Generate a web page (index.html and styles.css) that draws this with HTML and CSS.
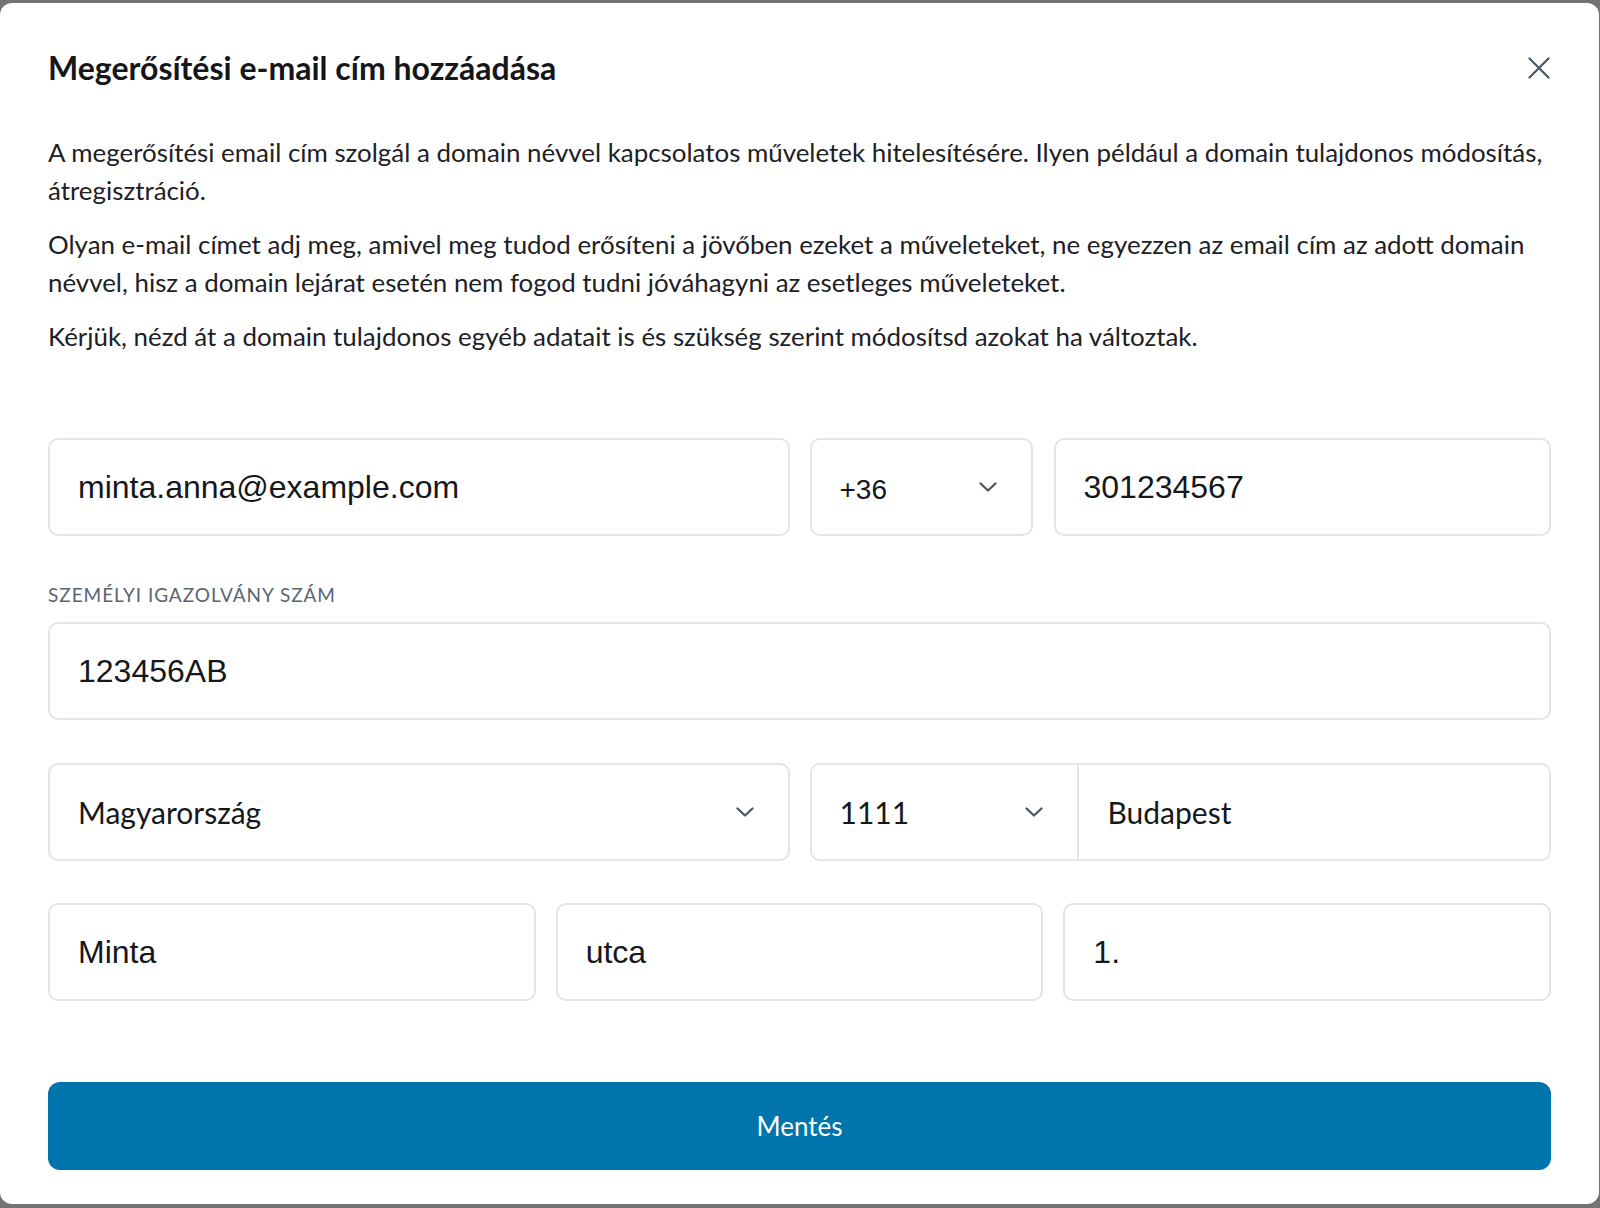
FILE: index.html
```html
<!DOCTYPE html>
<html lang="hu">
<head>
    <meta charset="UTF-8">
    <meta name="viewport" content="width=device-width, initial-scale=1.0">
    <title>Megerősítési e-mail cím hozzáadása</title>
    <link rel="stylesheet" href="styles.css">
</head>
<body>
    <div class="dialog">
        <div class="dialog-header">
            <h1>Megerősítési e-mail cím hozzáadása</h1>
            <button class="close-button" aria-label="Bezárás">
                <svg width="22" height="22" viewBox="0 0 22 22">
                    <path d="M1.5 1.5L20.5 20.5M20.5 1.5L1.5 20.5" stroke="#4b5563" stroke-width="2.2" stroke-linecap="round" fill="none"/>
                </svg>
            </button>
        </div>

        <div class="intro">
            <p>A megerősítési email cím szolgál a domain névvel kapcsolatos műveletek hitelesítésére. Ilyen például a domain tulajdonos módosítás, átregisztráció.</p>
            <p>Olyan e-mail címet adj meg, amivel meg tudod erősíteni a jövőben ezeket a műveleteket, ne egyezzen az email cím az adott domain névvel, hisz a domain lejárat esetén nem fogod tudni jóváhagyni az esetleges műveleteket.</p>
            <p>Kérjük, nézd át a domain tulajdonos egyéb adatait is és szükség szerint módosítsd azokat ha változtak.</p>
        </div>

        <form class="form" onsubmit="return false">
            <div class="row row-contact">
                <input type="text" class="field" value="minta.anna@example.com">
                <div class="phone">
                    <div class="select select-prefix">
                        <span>+36</span>
                        <svg class="chevron" width="18" height="10" viewBox="0 0 18 10"><path d="M1.5 1.5L9 8.5L16.5 1.5"/></svg>
                    </div>
                    <input type="text" class="field" value="301234567">
                </div>
            </div>

            <label class="field-label" for="idNumber">Személyi igazolvány szám</label>
            <input type="text" class="field" id="idNumber" value="123456AB">

            <div class="row row-address">
                <div class="select select-text">
                    <span>Magyarország</span>
                    <svg class="chevron" width="18" height="10" viewBox="0 0 18 10"><path d="M1.5 1.5L9 8.5L16.5 1.5"/></svg>
                </div>
                <div class="combo">
                    <div class="select select-text combo-zip">
                        <span>1111</span>
                        <svg class="chevron" width="18" height="10" viewBox="0 0 18 10"><path d="M1.5 1.5L9 8.5L16.5 1.5"/></svg>
                    </div>
                    <input type="text" class="combo-city" value="Budapest">
                </div>
            </div>

            <div class="row row-street">
                <input type="text" class="field" value="Minta">
                <input type="text" class="field" value="utca">
                <input type="text" class="field" value="1.">
            </div>

            <button type="submit" class="save-button">Mentés</button>
        </form>
    </div>
</body>
</html>
```

FILE: styles.css
```css
html {
    background: #737373;
}

body {
    margin: 0;
    padding: 3px 1px 4px 0;
    font-family: 'Lato', sans-serif;
    color: #1d2025;
}

.dialog {
    background: #ffffff;
    border-radius: 12px;
    padding: 45px 48px 34px;
}

.dialog-header {
    display: flex;
    justify-content: space-between;
    align-items: center;
    height: 40px;
}

h1 {
    margin: 0;
    font-size: 32px;
    line-height: 40px;
    font-weight: 700;
    color: #14161a;
}

.close-button {
    background: none;
    border: none;
    padding: 0;
    width: 22px;
    height: 22px;
    margin-right: 1px;
    display: flex;
    cursor: pointer;
}

.intro {
    margin-top: 45px;
}

.intro p {
    margin: 0 0 16px;
    font-size: 25.9px;
    line-height: 38px;
}

.intro p:last-child {
    margin-bottom: 0;
}

.form {
    margin-top: 83px;
    display: flex;
    flex-direction: column;
}

.row {
    display: grid;
    gap: 20px;
}

.row-contact,
.row-address {
    grid-template-columns: 1fr 1fr;
}

.row-address {
    margin-top: 43px;
}

.row-street {
    grid-template-columns: repeat(3, 1fr);
    margin-top: 42px;
}

.field,
.select,
.combo {
    box-sizing: border-box;
    height: 98px;
    border: 2px solid #e3e4e9;
    border-radius: 10px;
    background: #ffffff;
}

.field {
    width: 100%;
    padding: 0 28px;
    font-family: 'Liberation Sans', Arial, sans-serif;
    font-size: 32px;
    color: #15171b;
    outline: none;
}

.phone {
    display: flex;
    gap: 21px;
}

.select {
    display: flex;
    align-items: center;
    justify-content: space-between;
    padding: 0 34px 0 28px;
    color: #15171b;
    cursor: pointer;
}

.select-prefix {
    flex: 0 0 223px;
    font-family: 'Liberation Sans', Arial, sans-serif;
    font-size: 28px;
}

.select-prefix span {
    margin-top: 5px;
}

.select-text {
    font-size: 30px;
}

.chevron {
    flex-shrink: 0;
}

.chevron path {
    fill: none;
    stroke: #4b5563;
    stroke-width: 2.2;
    stroke-linecap: round;
    stroke-linejoin: round;
}

.field-label {
    margin-top: 47px;
    margin-bottom: 15px;
    font-size: 19px;
    line-height: 24px;
    letter-spacing: 0.95px;
    text-transform: uppercase;
    color: #5b6472;
}

.combo {
    display: flex;
    overflow: hidden;
}

.combo-zip {
    flex: 0 0 267px;
    height: 100%;
    border: none;
    border-right: 2px solid #e3e4e9;
    border-radius: 0;
}

.combo-city {
    flex: 1;
    min-width: 0;
    border: none;
    padding: 0 29px;
    font-family: 'Lato', sans-serif;
    font-size: 30px;
    color: #15171b;
    outline: none;
}

.save-button {
    margin-top: 81px;
    height: 88px;
    border: none;
    border-radius: 12px;
    background: #0074ad;
    color: #ffffff;
    font-family: 'Lato', sans-serif;
    font-size: 26px;
    cursor: pointer;
}
```
